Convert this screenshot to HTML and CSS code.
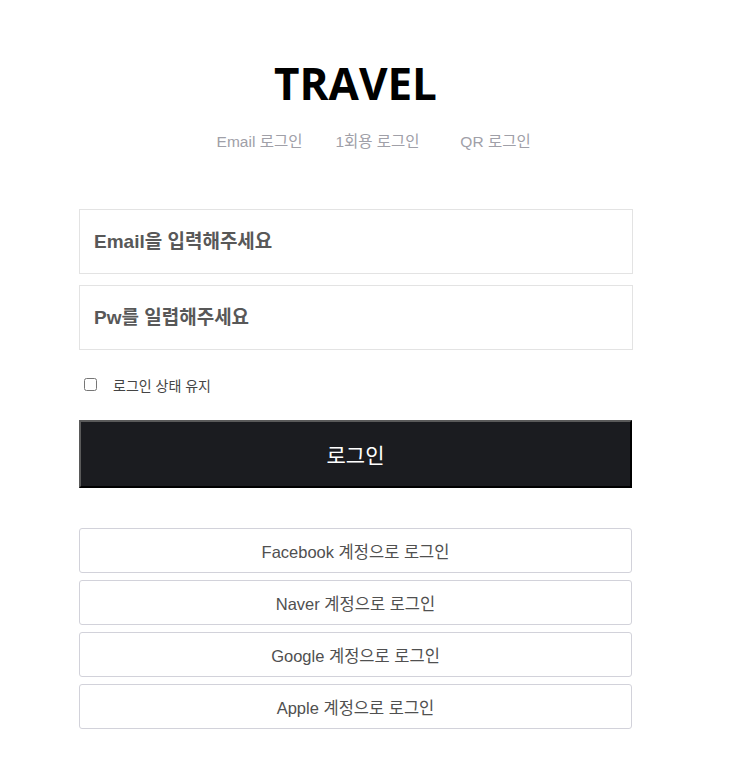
FILE: index.html
```html
<!DOCTYPE html>
<html lang="ko">
<head>
<meta charset="utf-8">
<title>TRAVEL 로그인</title>
<link rel="stylesheet" href="styles.css">
</head>
<body>
<div class="wrap">
  <h1 class="logo">TRAVEL</h1>
  <ul class="tabs">
    <li>Email 로그인</li>
    <li>1회용 로그인</li>
    <li>QR 로그인</li>
  </ul>
  <form class="form">
    <input class="field" type="text" placeholder="Email을 입력해주세요">
    <input class="field" type="password" placeholder="Pw를 일렵해주세요">
    <label class="keep"><input type="checkbox" class="chk"><span>로그인 상태 유지</span></label>
    <button type="button" class="login">로그인</button>
  </form>
  <div class="social">
    <button type="button" class="sbtn">Facebook 계정으로 로그인</button>
    <button type="button" class="sbtn">Naver 계정으로 로그인</button>
    <button type="button" class="sbtn">Google 계정으로 로그인</button>
    <button type="button" class="sbtn">Apple 계정으로 로그인</button>
  </div>
</div>
</body>
</html>
```
FILE: styles.css
```css
* { box-sizing: border-box; }
html, body { margin: 0; padding: 0; background: #fff; }
body { font-family: "Liberation Sans", "Noto Sans CJK KR", sans-serif; }
.wrap {
  width: 553px;
  margin-left: 79px;
  padding-top: 57px;
}
.logo {
  margin: 0;
  text-align: center;
  font-family: "Open Sans", "Noto Sans", sans-serif;
  font-weight: 700;
  font-size: 44px;
  line-height: 52px;
  color: #000;
}
.tabs {
  list-style: none;
  margin: 23px 0 0;
  padding: 0 0 0 44px;
  display: flex;
  justify-content: center;
}
.tabs li {
  width: 118px;
  text-align: center;
  font-size: 15.5px;
  line-height: 20px;
  color: #a0a0a8;
}
.form {
  margin-top: 57px;
  display: flex;
  flex-direction: column;
}
.field {
  width: 554px;
  height: 65px;
  border: 1px solid #e3e3e3;
  padding: 0 14px;
  font-family: "Liberation Sans", "Noto Sans CJK KR", sans-serif;
  font-size: 19px;
  font-weight: 700;
  outline: none;
  margin: 0 0 11px;
}
.field::placeholder { color: #585858; font-weight: 700; }
.keep {
  display: flex;
  align-items: center;
  height: 26px;
  margin-top: 11px;
  font-size: 14px;
  color: #444;
}
.chk {
  margin: 0 0 2px 5px;
  width: 13px;
  height: 13px;
}
.keep span { margin-left: 16px; }
.login {
  margin-top: 22px;
  width: 553px;
  height: 68px;
  background: #1b1c20;
  border: 2px outset #5a5a5a;
  border-right-color: #000;
  border-bottom-color: #000;
  color: #fff;
  font-family: "Liberation Sans", "Noto Sans CJK KR", sans-serif;
  font-size: 21px;
  padding: 0;
}
.social {
  margin-top: 40px;
  display: flex;
  flex-direction: column;
  gap: 7px;
}
.sbtn {
  width: 553px;
  height: 45px;
  background: #fff;
  border: 1px solid #d2d2da;
  border-radius: 3px;
  font-family: "Liberation Sans", "Noto Sans CJK KR", sans-serif;
  font-size: 16.5px;
  color: #505050;
  padding: 0;
}
```
